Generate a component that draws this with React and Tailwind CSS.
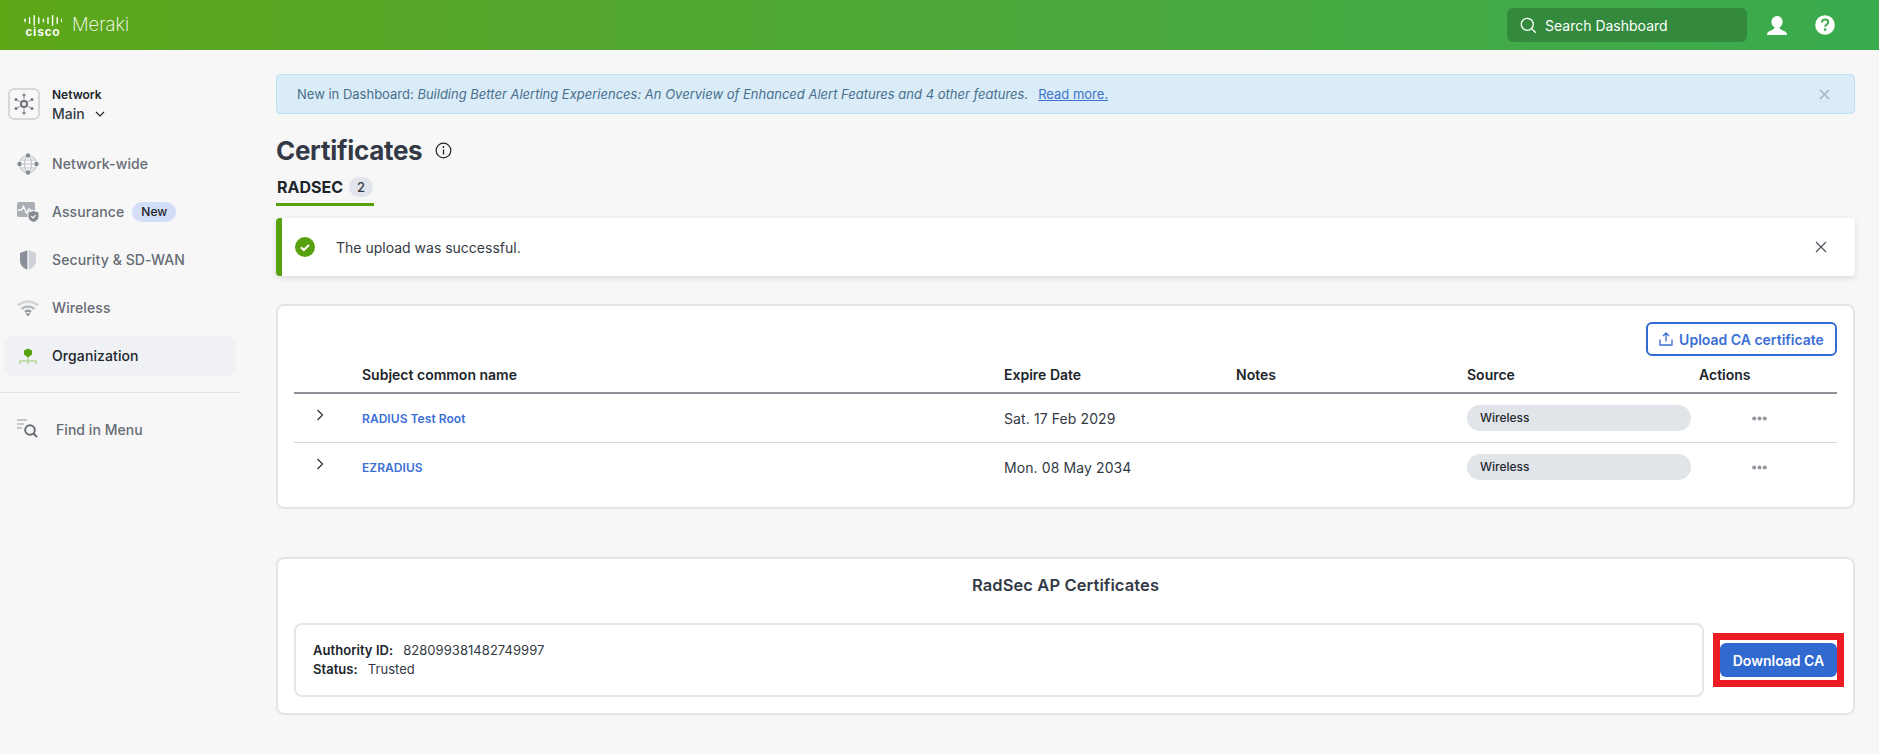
import React from "react";

const CiscoLogo = () => (
  <div className="flex flex-col items-center w-[38px] pt-[1px]">
    <svg width="38" height="11" viewBox="0 0 38 11" fill="#ffffff">
      {[4, 7, 11, 7, 4, 7, 11, 7, 4].map((h, i) => (
        <rect key={i} x={i * 4.6 + 0.3} y={(11 - h) / 2} width="1.4" height={h} rx="0.7" />
      ))}
    </svg>
    <span className="text-[12px] leading-[10px] font-bold tracking-[0.9px] text-white mt-[1px] font-['Liberation_Sans',sans-serif]">cisco</span>
  </div>
);

const HubIcon = () => (
  <svg width="24" height="24" viewBox="0 0 24 24">
    <g stroke="#9a9fa6" strokeWidth="1" fill="#757b83">
      <line x1="12" y1="12" x2="12" y2="3" /><line x1="12" y1="12" x2="12" y2="21" />
      <line x1="12" y1="12" x2="4" y2="7.500" /><line x1="12" y1="12" x2="20" y2="7.500" />
      <line x1="12" y1="12" x2="4" y2="16.500" /><line x1="12" y1="12" x2="20" y2="16.500" />
      <circle cx="12" cy="3" r="1.500" stroke="none" /><circle cx="12" cy="21" r="1.500" stroke="none" />
      <circle cx="4" cy="7.500" r="1.500" stroke="none" /><circle cx="20" cy="7.500" r="1.500" stroke="none" />
      <circle cx="4" cy="16.500" r="1.500" stroke="none" /><circle cx="20" cy="16.500" r="1.500" stroke="none" />
    </g>
    <circle cx="12" cy="12" r="3" fill="#f7f7f7" stroke="#6e747c" strokeWidth="2" />
  </svg>
);

const GlobeIcon = () => (
  <svg width="22" height="22" viewBox="0 0 22 22" fill="none">
    <circle cx="11" cy="11" r="8.500" stroke="#c3c7cd" strokeWidth="1.200" />
    <ellipse cx="11" cy="11" rx="3.600" ry="8.500" stroke="#c3c7cd" strokeWidth="1.200" />
    <path d="M3 11h16M4.400 7h13.200M4.400 15h13.200" stroke="#c3c7cd" strokeWidth="1.200" />
    <g fill="#858b93"><circle cx="11" cy="2.500" r="2.200" /><circle cx="11" cy="19.500" r="2.200" /><circle cx="2.500" cy="11" r="2.200" /><circle cx="19.500" cy="11" r="2.200" /></g>
  </svg>
);

const AssuranceIcon = () => (
  <svg width="22" height="22" viewBox="0 0 22 22" fill="none">
    <rect x="0" y="1" width="18" height="15" rx="2" fill="#a9adb4" />
    <path d="M1 9h3.500l2-3.500 3 6.500 2.500-4 1.500 1.500h3" stroke="#f7f7f7" strokeWidth="1.500" />
    <path d="M16.500 9.500l5.500 1.700v4.300c0 3.200-2.500 5-5.500 6-3-1-5.500-2.800-5.500-6v-4.300z" fill="#858b93" stroke="#f7f7f7" strokeWidth="1" />
    <path d="M14.200 15.200l1.700 1.700 2.800-2.800" stroke="#fff" strokeWidth="1.200" />
  </svg>
);

const ShieldIcon = () => (
  <svg width="18" height="20" viewBox="0 0 18 20">
    <path d="M8.300 0.300v19.400C3.300 18 1 14.500 1 10V3z" fill="#8a9099" />
    <path d="M9.700 0.300L17 3v7c0 4.500-2.300 8-7.300 9.700z" fill="#ced1d6" />
  </svg>
);

const WifiIcon = () => (
  <svg width="22" height="18" viewBox="0 0 22 18" fill="none">
    <path d="M1 6.500C6.500 1.300 15.500 1.300 21 6.500" stroke="#d3d6da" strokeWidth="2.600" />
    <path d="M4.500 10C8.200 6.700 13.800 6.700 17.500 10" stroke="#b6babf" strokeWidth="2.600" />
    <path d="M8 13c1.800-1.400 4.200-1.400 6 0" stroke="#999ea5" strokeWidth="2.400" />
    <path d="M8.500 14.500h5l-2.500 2.800z" fill="#7f858d" />
  </svg>
);

const OrgIcon = () => (
  <svg width="18" height="17" viewBox="0 0 18 17" fill="none">
    <path d="M9 0.500l4 2v4l-4 3-4-3v-4z" fill="#57a10e" />
    <path d="M9 9v4M1 16v-3h16v3M9 13v3" stroke="#b2d794" strokeWidth="1.500" />
  </svg>
);

const FindIcon = () => (
  <svg width="22" height="22" viewBox="0 0 22 22" fill="none">
    <path d="M1 2h10M1 6h7M1 10h5" stroke="#b6babf" strokeWidth="1.500" />
    <circle cx="14" cy="12" r="4.800" stroke="#666c74" strokeWidth="2" />
    <path d="M17.500 15.500l3.500 3.500" stroke="#666c74" strokeWidth="2" />
  </svg>
);

const NavItem = ({ icon, label, active, badge }) => (
  <div className={`flex items-center h-[40px] mx-[4px] mb-[8px] rounded-[8px] ${active ? "bg-[#eff1f4]" : ""}`}>
    <div className="w-[48px] pl-[8px] pr-[8px] flex justify-center shrink-0">{icon}</div>
    <span className={`text-[14px] tracking-[0.1px] font-medium pb-[1px] ${active ? "text-[#20252b]" : "text-[#666c75]"}`}>{label}</span>
    {badge && <span className="ml-[8px] px-[9px] h-[20px] leading-[20px] rounded-full bg-[#d2ddf8] text-[12px] font-medium text-[#20252b]">{badge}</span>}
  </div>
);

const Sidebar = () => (
  <aside className="w-[240px] shrink-0 pt-[38px]">
    <div className="flex items-center pl-[8px] h-[32px] mb-[24px]">
      <div className="w-[32px] h-[32px] rounded-[6px] border-2 border-[#d6d8db] flex items-center justify-center"><HubIcon /></div>
      <div className="ml-[12px] flex flex-col pt-[4px]">
        <span className="text-[12px] leading-[16px] font-semibold text-[#20252b]">Network</span>
        <span className="text-[14px] leading-[22px] font-medium text-[#333a45] flex items-center">Main
          <svg className="ml-[10px]" width="10" height="6" viewBox="0 0 10 6" fill="none"><path d="M1 1l4 4 4-4" stroke="#20252b" strokeWidth="1.200" /></svg>
        </span>
      </div>
    </div>
    <NavItem icon={<GlobeIcon />} label="Network-wide" />
    <NavItem icon={<AssuranceIcon />} label="Assurance" badge="New" />
    <NavItem icon={<ShieldIcon />} label="Security & SD-WAN" />
    <NavItem icon={<WifiIcon />} label="Wireless" />
    <NavItem icon={<OrgIcon />} label="Organization" active />
    <div className="border-t border-[#e0e2e8] mt-[16px] pt-[16px]">
      <div className="flex items-center h-[40px]">
        <div className="w-[56px] pl-[16px] shrink-0"><FindIcon /></div>
        <span className="text-[14px] tracking-[0.05px] font-medium text-[#666c75]">Find in Menu</span>
      </div>
    </div>
  </aside>
);

const Dots = () => (
  <svg width="15" height="5" viewBox="0 0 15 5" fill="#92969d"><circle cx="2.200" cy="2.500" r="2" /><circle cx="7.500" cy="2.500" r="2" /><circle cx="12.800" cy="2.500" r="2" /></svg>
);

const Row = ({ name, date, border }) => (
  <div className={`flex items-center ${border ? "h-[49px] border-b border-[#d5d7dd]" : "h-[48px]"}`}>
    <div className="w-[68px] shrink-0 pl-[22px] pb-[6px]">
      <svg width="8" height="12" viewBox="0 0 8 12" fill="none"><path d="M1.500 1l5 5-5 5" stroke="#33383f" strokeWidth="1.300" /></svg>
    </div>
    <div className="w-[642px] shrink-0 pt-[2px] text-[12px] font-semibold tracking-[0.05px] text-[#3b6fd6]">{name}</div>
    <div className="w-[232px] shrink-0 pt-[1px] text-[14px] tracking-[0.1px] text-[#333a45]">{date}</div>
    <div className="w-[231px] shrink-0"></div>
    <div className="w-[232px] shrink-0">
      <div className="w-[224px] h-[26px] rounded-full bg-[#e1e4e8] pl-[13px] flex items-center text-[12px] font-medium text-[#262b32]">Wireless</div>
    </div>
    <div className="w-[120px] shrink-0 flex justify-center"><Dots /></div>
  </div>
);

export default function App() {
  return (
    <div className="w-full min-h-[754px] bg-[#f7f7f7] font-['Inter',sans-serif] overflow-hidden">
      <header className="h-[50px] bg-gradient-to-r from-[#5da616] to-[#39ab4e] flex items-center pl-[24px] pr-[44px]">
        <CiscoLogo />
        <span className="ml-[10px] text-[18.500px] font-extralight text-white">Meraki</span>
        <div className="ml-auto w-[240px] h-[34px] bg-[#338a3d] rounded-[6px] flex items-center pl-[13px]">
          <svg width="17" height="17" viewBox="0 0 17 17" fill="none"><circle cx="7.300" cy="7.300" r="6" stroke="#fff" strokeWidth="1.300" /><path d="M11.800 11.800l4 4" stroke="#fff" strokeWidth="1.300" /></svg>
          <span className="ml-[8px] text-[14px] text-white">Search Dashboard</span>
        </div>
        <svg className="ml-[20px]" width="20" height="19" viewBox="0 0 20 19" fill="#fff"><ellipse cx="10" cy="6" rx="5.600" ry="6" /><path d="M7.500 11.500c-.2 1.500-2 2.500-4.500 3.500-1.700.7-3 1.500-3 4h20c0-2.500-1.300-3.300-3-4-2.500-1-4.300-2-4.500-3.500z" /></svg>
        <svg className="ml-[28px]" width="20" height="20" viewBox="0 0 20 20"><circle cx="10" cy="10" r="9.800" fill="#fff" /><path d="M6.800 7.500c.2-2 1.600-3 3.300-3 1.800 0 3.100 1.100 3.100 2.700 0 2.500-3.100 2.600-3.100 4.600" fill="none" stroke="#3dab4c" strokeWidth="2" /><circle cx="10.100" cy="14.600" r="1.300" fill="#3dab4c" /></svg>
      </header>
      <div className="flex">
        <Sidebar />
        <main className="flex-1 min-w-0 pl-[36px] pr-[24px] pt-[24px]">
          <div className="h-[40px] pt-[1px] rounded-[4px] bg-[#d9ecf8] border border-[#bde2f3] flex items-center pl-[20px] pr-[24px] text-[13px] text-[#4a6f8c]">
            <span>New in Dashboard:&nbsp;<em>Building Better Alerting Experiences: An Overview of Enhanced Alert Features and 4 other features.</em></span>
            <span className="ml-[10px] underline text-[#3f72c9]">Read more.</span>
            <svg className="ml-auto" width="11" height="11" viewBox="0 0 11 11" fill="none"><path d="M1 1l9 9M10 1l-9 9" stroke="#a6adb4" strokeWidth="1.300" /></svg>
          </div>
          <div className="flex items-center mt-[20px] h-[32px]">
            <h1 className="text-[26px] font-bold text-[#333a45] tracking-[-0.3px]">Certificates</h1>
            <svg className="ml-[13px]" width="17" height="17" viewBox="0 0 17 17" fill="none"><circle cx="8.500" cy="8.500" r="7.300" stroke="#20252b" strokeWidth="1.200" /><path d="M8.500 7.500v5" stroke="#20252b" strokeWidth="1.300" /><circle cx="8.500" cy="5" r="0.900" fill="#20252b" /></svg>
          </div>
          <div className="mt-[11px] w-[98px] h-[29px] border-b-[3px] border-[#57a10e] flex items-start pl-[1px]">
            <span className="text-[16px] leading-[20px] font-bold text-[#20252b]">RADSEC</span>
            <span className="ml-[6px] w-[24px] h-[20px] rounded-full bg-[#e1e4ea] text-center text-[13px] leading-[20px] font-medium text-[#333a45]">2</span>
          </div>
          <div className="mt-[12px] h-[58px] bg-white rounded-[4px] border-l-[6px] border-[#57a10e] shadow-[0_2px_6px_rgba(0,0,0,0.12)] flex items-center pl-[13px] pr-[28px]">
            <svg width="20" height="20" viewBox="0 0 20 20"><circle cx="10" cy="10" r="10" fill="#57a10e" /><path d="M6 10.300l2.800 2.700 5.200-5" fill="none" stroke="#fff" strokeWidth="2" /></svg>
            <span className="ml-[21px] text-[14px] text-[#333a45]">The upload was successful.</span>
            <svg className="ml-auto" width="12" height="12" viewBox="0 0 12 12" fill="none"><path d="M1 1l10 10M11 1L1 11" stroke="#4e545c" strokeWidth="1.200" /></svg>
          </div>
          <section className="mt-[28px] h-[205px] bg-white rounded-[8px] border-2 border-[#e2e5e9] px-[16px] pt-[16px]">
            <div className="flex justify-end">
              <button className="h-[34px] w-[191px] rounded-[6px] border-2 border-[#2f6bd1] flex items-center justify-center text-[14px] font-semibold text-[#3b6fd6]">
                <svg className="mr-[6px]" width="14" height="14" viewBox="0 0 14 14" fill="none"><path d="M7 9.500V1.500M4 4l3-3 3 3" stroke="#3b6fd6" strokeWidth="1.300" /><path d="M1 7.500V13h12V7.500" stroke="#3b6fd6" strokeWidth="1.300" /></svg>
                Upload CA certificate
              </button>
            </div>
            <div className="flex h-[38px] items-center border-b-2 border-[#8e9198] text-[14px] font-semibold text-[#20252b]">
              <div className="w-[68px] shrink-0"></div>
              <div className="w-[642px] shrink-0">Subject common name</div>
              <div className="w-[232px] shrink-0">Expire Date</div>
              <div className="w-[231px] shrink-0">Notes</div>
              <div className="w-[232px] shrink-0">Source</div>
              <div className="shrink-0">Actions</div>
            </div>
            <Row name="RADIUS Test Root" date="Sat. 17 Feb 2029" border />
            <Row name="EZRADIUS" date="Mon. 08 May 2034" />
          </section>
          <section className="mt-[48px] h-[158px] bg-white rounded-[8px] border-2 border-[#e2e5e9] px-[16px] pt-[15px]">
            <h2 className="text-center text-[16.500px] leading-[22px] font-semibold text-[#333a45] tracking-[0.1px]">RadSec AP Certificates</h2>
            <div className="mt-[27px] flex items-center">
              <div className="h-[74px] w-[1410px] shrink-0 rounded-[8px] border-2 border-[#e2e5e9] pl-[17px] flex flex-col justify-center text-[13px] tracking-[0.05px] leading-[19px] text-[#333a45]">
                <div><span className="font-semibold text-[#20252b]">Authority ID:</span><span className="ml-[10px]">828099381482749997</span></div>
                <div><span className="font-semibold text-[#20252b]">Status:</span><span className="ml-[10px]">Trusted</span></div>
              </div>
              <div className="ml-[9px] border-[7px] border-[#ec1c24] bg-white py-[3px] shrink-0">
                <button className="block w-[117px] h-[34px] rounded-[6px] bg-[#3069cf] text-white text-[14px] font-semibold">Download CA</button>
              </div>
            </div>
          </section>
        </main>
      </div>
    </div>
  );
}
